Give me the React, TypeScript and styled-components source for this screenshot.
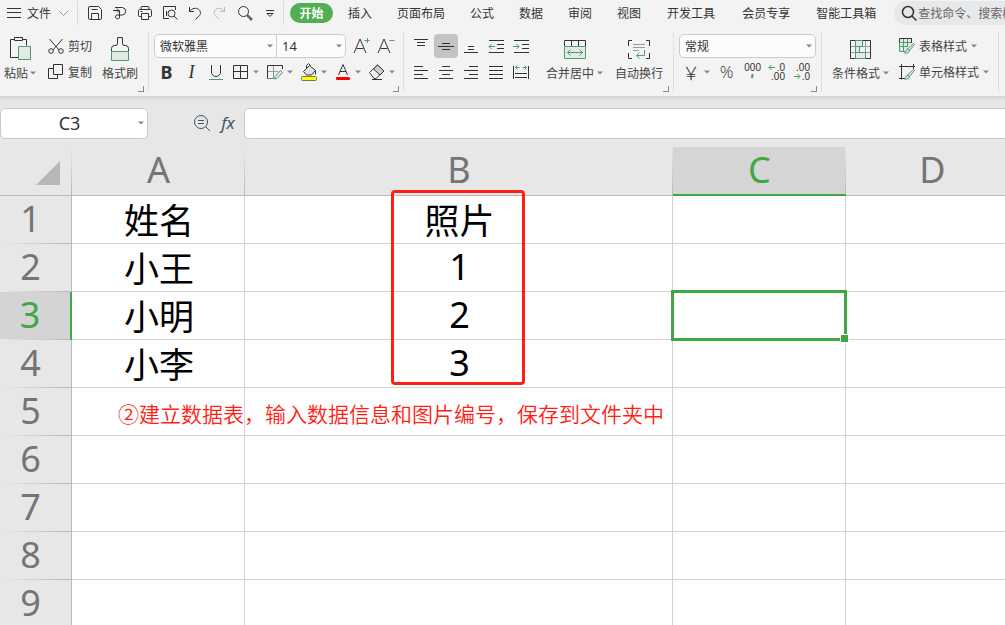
import React from "react";
import styled, { createGlobalStyle, css } from "styled-components";

const INK = "#333333";
const LEAF = "#4f9a72";
const GREEN = "#41a745";
const RED = "#ff2013";
const LINE = "#d2d2d2";

const GlobalStyle = createGlobalStyle`
  * { box-sizing: border-box; }
  body {
    margin: 0;
    background: #e7e7e7;
    color: ${INK};
    font-family: "Noto Sans", "Noto Sans CJK SC", sans-serif;
    font-size: 12px;
  }
  button, input, select {
    margin: 0;
    padding: 0;
    border: 0;
    background: none;
    color: inherit;
    font: inherit;
  }
  svg { display: block; flex: none; }
`;

const Page = styled.div`
  display: flex;
  flex-direction: column;
  height: 100vh;
  overflow: hidden;
`;

/* ---------- icons ---------- */

const IconSvg = styled.svg`
  fill: none;
  stroke: ${INK};
  stroke-width: 1;
  .g { stroke: ${LEAF}; }
  .soft { stroke: #9a9a9a; }
  .tint { stroke: ${LEAF}; fill: #e3eae6; }
  text {
    stroke: none;
    fill: ${INK};
    font-family: "Liberation Sans", sans-serif;
    font-size: 10px;
    text-anchor: end;
  }
`;

type IconProps = { w?: number; h?: number; children: React.ReactNode };
const Icon = ({ w = 16, h = 16, children }: IconProps) => (
  <IconSvg width={w} height={h} viewBox={`0 0 ${w} ${h}`} aria-hidden="true">
    {children}
  </IconSvg>
);

const Caret = () => (
  <svg width="6" height="4" viewBox="0 0 6 4" aria-hidden="true">
    <path d="M0 0.5h6L3 3.5z" fill="#858585" />
  </svg>
);

/* ---------- menu bar ---------- */

const Ribbon = styled.header`
  flex: none;
  background: #f3f3f3;
  border-bottom: 1px solid #d6d6d6;
  box-shadow: 0 1px 3px rgba(0, 0, 0, 0.12);
  z-index: 1;
`;

const MenuBar = styled.nav`
  display: flex;
  align-items: center;
  height: 26px;
  padding-left: 7px;
`;

const FileButton = styled.button`
  display: flex;
  align-items: center;
  flex: none;
  gap: 6px;
  height: 24px;
  margin-right: 8px;
`;

const Divider = styled.span`
  flex: none;
  width: 1px;
  height: 24px;
  background: #dcdcdc;
`;

const QuickAccess = styled.div`
  display: flex;
  flex: none;
  padding: 0 1px 0 4px;
`;

const IconButton = styled.button<{ $w?: number; $active?: boolean }>`
  display: flex;
  align-items: center;
  justify-content: center;
  flex: none;
  width: ${(p) => p.$w ?? 24}px;
  height: 24px;
  border-radius: 4px;
  background: ${(p) => (p.$active ? "#c3c3c3" : "transparent")};
`;

const Tabs = styled.div`
  display: flex;
  flex: none;
  gap: 1px;
  margin-left: 6px;
`;

const Tab = styled.button<{ $current?: boolean; $wide?: boolean }>`
  height: 20px;
  padding: 0 ${(p) => (p.$wide ? 13 : 12)}px;
  line-height: 22px;
  white-space: nowrap;
  ${(p) =>
    p.$current &&
    css`
      width: 43px;
      padding: 0;
      margin-right: 2px;
      border-radius: 10px;
      background: #50ae53;
      color: #ffffff;
      font-weight: 700;
    `}
`;

const Search = styled.label`
  display: flex;
  align-items: center;
  flex: 1;
  gap: 1px;
  min-width: 0;
  height: 24px;
  margin-left: 6px;
  padding-left: 7px;
  border-radius: 12px 0 0 12px;
  background: #e6e8ea;
  input {
    flex: 1;
    min-width: 0;
    outline: none;
  }
  input::placeholder {
    color: #666666;
    opacity: 1;
  }
`;

/* ---------- tool ribbon ---------- */

const Tools = styled.div`
  display: flex;
  height: 70px;
  padding: 6px 0 4px;
`;

const Group = styled.section<{ $pl: number; $pr: number }>`
  position: relative;
  display: flex;
  flex: none;
  height: 60px;
  padding: 1px ${(p) => p.$pr}px 0 ${(p) => p.$pl}px;
  border-right: 1px solid #dfdfdf;
`;

const Launcher = styled.button`
  position: absolute;
  right: 4px;
  bottom: 0;
  width: 6px;
  height: 6px;
  border: solid #8a8a8a;
  border-width: 0 1px 1px 0;
`;

const Stack = styled.div<{ $ml?: number }>`
  display: flex;
  flex-direction: column;
  flex: none;
  margin-left: ${(p) => p.$ml ?? 0}px;
`;

const Row = styled.div<{ $gap?: number }>`
  display: flex;
  align-items: center;
  height: 26px;
  gap: ${(p) => p.$gap ?? 0}px;
`;

const Tool = styled.button`
  display: flex;
  align-items: center;
  gap: 4px;
  height: 26px;
  color: #444444;
  white-space: nowrap;
`;

const BigTool = styled.button<{ $ml?: number }>`
  display: flex;
  flex-direction: column;
  align-items: center;
  flex: none;
  height: 52px;
  margin-left: ${(p) => p.$ml ?? 0}px;
  color: #444444;
`;

const Label = styled.span<{ $gap?: number }>`
  display: flex;
  align-items: center;
  gap: ${(p) => p.$gap ?? 3}px;
  height: 24px;
  white-space: nowrap;
`;

const DropTool = styled.button<{ $w?: number }>`
  display: flex;
  align-items: center;
  gap: 3px;
  width: ${(p) => p.$w ?? 34}px;
  height: 24px;
  padding-left: 2px;
`;

const Fields = styled.div`
  display: flex;
  width: 192px;
  margin-right: 4px;
  height: 24px;
  border: 1px solid #cccccc;
  border-radius: 5px;
  background: #fcfcfc;
  label + label { border-left: 1px solid #cccccc; }
`;

const SelectBox = styled.label<{ $w?: number; $solo?: boolean; $big?: boolean }>`
  display: flex;
  align-items: center;
  ${(p) => (p.$w ? `width: ${p.$w}px;` : "flex: 1;")}
  height: ${(p) => (p.$solo ? 24 : 22)}px;
  padding: 0 3px 0 5px;
  font-size: ${(p) => (p.$big ? 13 : 12)}px;
  ${(p) =>
    p.$solo &&
    css`
      border: 1px solid #cccccc;
      border-radius: 5px;
      background: #fcfcfc;
    `}
  select {
    flex: 1;
    min-width: 0;
    height: 20px;
    appearance: none;
    outline: none;
  }
`;

const FormatText = styled.span<{ $bold?: boolean; $italic?: boolean }>`
  font-family: ${(p) => (p.$italic ? '"Liberation Serif", serif' : '"Noto Sans", sans-serif')};
  font-size: 18px;
  line-height: 24px;
  font-weight: ${(p) => (p.$bold ? 700 : 400)};
  font-style: ${(p) => (p.$italic ? "italic" : "normal")};
`;

const PercentText = styled.span`
  font-family: "Open Sans", "Noto Sans", sans-serif;
  font-size: 17px;
  font-weight: 300;
  line-height: 24px;
`;

const YenText = styled.span`
  width: 20px;
  font-family: "Noto Sans CJK SC", sans-serif;
  font-size: 18px;
  font-weight: 300;
  line-height: 24px;
  text-align: center;
`;

/* ---------- formula bar ---------- */

const FormulaBar = styled.div`
  display: flex;
  align-items: center;
  flex: none;
  height: 46px;
  padding: 7px 0 0;
`;

const NameBox = styled.label`
  display: flex;
  align-items: center;
  width: 148px;
  height: 31px;
  padding: 0 3px 2px 0;
  border: 1px solid #c9c9c9;
  border-radius: 5px;
  background: #ffffff;
  input {
    flex: 1;
    min-width: 0;
    font-size: 18px;
    text-align: center;
    outline: none;
  }
`;

const FormulaTools = styled.div`
  display: flex;
  align-items: center;
  gap: 2px;
  height: 31px;
  padding-bottom: 2px;
  margin: 0 4px 0 42px;
`;

const FxText = styled.span`
  color: #44506b;
  font-family: "Noto Sans", sans-serif;
  font-size: 17px;
  font-style: italic;
`;

const FormulaInput = styled.input`
  flex: 1;
  min-width: 0;
  height: 31px;
  padding: 0 8px;
  border: 1px solid #c9c9c9;
  border-right: 0;
  border-radius: 5px 0 0 5px;
  background: #ffffff;
  font-size: 18px;
  outline: none;
`;

/* ---------- sheet ---------- */

const SheetArea = styled.main`
  flex: 1;
  min-height: 0;
  padding-top: 4px;
  overflow: hidden;
`;

const Sheet = styled.table`
  width: 100%;
  min-width: 1019px;
  table-layout: fixed;
  border-collapse: separate;
  border-spacing: 0;
  font-size: 35px;
  line-height: 44px;
  text-align: center;
`;

const ColHead = styled.th<{ $current?: boolean }>`
  height: 49px;
  padding: 0 0 2px;
  background-repeat: no-repeat;
  background-image: linear-gradient(to bottom, #e7e7e7, #b9b9b9);
  background-size: 1px 100%;
  background-position: right top;
  background-color: ${(p) => (p.$current ? "#d5d5d5" : "#e7e7e7")};
  border-bottom: ${(p) => (p.$current ? `2px solid ${GREEN}` : "1px solid #b9b9b9")};
  color: ${(p) => (p.$current ? GREEN : "#757575")};
  font-size: 36px;
  font-weight: 400;
`;

const Corner = styled(ColHead)`
  vertical-align: bottom;
  svg { margin: 0 0 8px 36px; }
`;

const RowHead = styled.th<{ $current?: boolean }>`
  height: 48px;
  padding: 0 10px 2px 0;
  background: linear-gradient(to right, #e7e7e7, #b9b9b9) left bottom / 100% 1px no-repeat
    ${(p) => (p.$current ? "#d4d4d4" : "#e7e7e7")};
  border-right: ${(p) => (p.$current ? `2px solid ${GREEN}` : "1px solid #b9b9b9")};
  color: ${(p) => (p.$current ? GREEN : "#757575")};
  font-size: 36px;
  font-weight: 400;
`;

const Cell = styled.td<{ $number?: boolean }>`
  position: relative;
  height: 48px;
  padding: ${(p) => (p.$number ? "0 0 2px 2px" : "2px 0 0 2px")};
  border-right: 1px solid ${LINE};
  border-bottom: 1px solid ${LINE};
  background: #ffffff;
  color: #000000;
  font-size: ${(p) => (p.$number ? 36 : 35)}px;
`;

const Selection = styled.div`
  position: absolute;
  z-index: 1;
  inset: -2px;
  border: 3px solid ${GREEN};
  &::after {
    content: "";
    position: absolute;
    right: -5px;
    bottom: -5px;
    width: 7px;
    height: 7px;
    border: 1px solid #ffffff;
    background: ${GREEN};
  }
`;

const RedFrame = styled.div`
  position: absolute;
  z-index: 2;
  top: -6px;
  left: 146px;
  width: 134px;
  height: 195px;
  border: 3px solid ${RED};
  border-radius: 4px;
`;

const Note = styled.div`
  position: absolute;
  z-index: 2;
  top: 10px;
  left: 46px;
  color: ${RED};
  font-family: "Noto Sans CJK SC", sans-serif;
  font-size: 21px;
  font-weight: 350;
  line-height: 30px;
  white-space: nowrap;
`;

const tabs: { name: string; wide?: boolean }[] = [
  { name: "插入" },
  { name: "页面布局" },
  { name: "公式" },
  { name: "数据" },
  { name: "审阅" },
  { name: "视图" },
  { name: "开发工具", wide: true },
  { name: "会员专享", wide: true },
  { name: "智能工具箱" },
];

const columns = ["A", "B", "C", "D"];
const data: Record<string, string> = {
  A1: "姓名", A2: "小王", A3: "小明", A4: "小李",
  B1: "照片", B2: "1", B3: "2", B4: "3",
};

const quick: { name: string; art: React.ReactNode }[] = [
  {
    name: "保存",
    art: (
      <>
        <path d="M3 1.5h8.5l3 3V13a1.500 1.500 0 0 1-1.500 1.500H3A1.500 1.500 0 0 1 1.500 13V3A1.500 1.500 0 0 1 3 1.500z" />
        <path d="M4.500 4.500h6M4.500 14.500v-6h7v6" />
      </>
    ),
  },
  {
    name: "输出为PDF",
    art: (
      <>
        <path d="M3 2.500h7.500a3.800 3.800 0 0 1 0 7.500H5a2 2 0 1 0 2.500 2V5.500" />
        <path d="M1 5.500h6M5 3.500l2 2-2 2" />
      </>
    ),
  },
  {
    name: "打印",
    art: (
      <>
        <path d="M4 4.500V2.500a1 1 0 0 1 1-1h6a1 1 0 0 1 1 1v2" />
        <path d="M4 11.500H2.500a1 1 0 0 1-1-1v-5a1 1 0 0 1 1-1h11a1 1 0 0 1 1 1v5a1 1 0 0 1-1 1H12" />
        <path d="M4.500 8.500h7v6h-7zM3.500 6.500h2" />
      </>
    ),
  },
  {
    name: "打印预览",
    art: (
      <>
        <path d="M13.500 5V1.500h-12v12H7" />
        <circle cx="9.500" cy="8.500" r="3.500" />
        <path d="M12 11l3.500 3.500M4.500 11V6" />
      </>
    ),
  },
  { name: "撤销", art: <path d="M2.500 2v4.500H7M2.500 6.500C5 3 9 2.500 11.500 4.200c2.500 1.800 2.500 5 .5 7L8.500 14.500" /> },
  { name: "恢复", art: <path style={{ stroke: "#b8b8b8" }} d="M12.500 2v4.500H8M12.500 6.500C10 3 6 2.500 4 4.200c-2.200 1.800-2.200 5 0 7L6.500 14" /> },
  {
    name: "查找",
    art: (
      <>
        <circle cx="6.500" cy="6.500" r="5" />
        <path d="M10 10l5 5" strokeWidth="2.500" stroke="#666666" />
      </>
    ),
  },
  { name: "更多", art: <path d="M4 5.500h8M5 8.500h6l-3 3z" /> },
];

const lines = (rows: [number, number, number][]) => rows.map(([a, b, y]) => `M${a} ${y}h${b - a}`).join("");

const alignTop: { name: string; active?: boolean; art: React.ReactNode }[] = [
  { name: "顶端对齐", art: <path d={lines([[1, 15, 1.5], [4, 12, 4.5], [4, 12, 7.5]])} /> },
  { name: "垂直居中", active: true, art: <path d={lines([[4, 12, 5.5], [0, 16, 8.5], [4, 12, 11.5]])} /> },
  { name: "底端对齐", art: <path d={lines([[5, 11, 8.5], [5, 11, 11.5], [1, 15, 14.5]])} /> },
  {
    name: "减少缩进",
    art: (
      <>
        <path d={lines([[1, 16, 2.5], [9, 16, 6.5], [9, 16, 10.5], [1, 16, 14.5]])} />
        <path className="g" d="M7 8.500H1M3.500 6L1 8.500 3.500 11" />
      </>
    ),
  },
  {
    name: "增加缩进",
    art: (
      <>
        <path d={lines([[1, 16, 2.5], [9, 16, 6.5], [9, 16, 10.5], [1, 16, 14.5]])} />
        <path className="g" d="M0 8.500h6M3.500 6L6 8.500 3.500 11" />
      </>
    ),
  },
];

const alignBottom: { name: string; art: React.ReactNode }[] = [
  { name: "左对齐", art: <path d={lines([[1, 10, 2.5], [1, 15, 6.5], [1, 10, 10.5], [1, 15, 14.5]])} /> },
  { name: "居中", art: <path d={lines([[4, 12, 2.5], [1, 15, 6.5], [4, 12, 10.5], [1, 15, 14.5]])} /> },
  { name: "右对齐", art: <path d={lines([[6, 15, 2.5], [1, 15, 6.5], [6, 15, 10.5], [1, 15, 14.5]])} /> },
  { name: "两端对齐", art: <path d={lines([[1, 15, 2.5], [1, 15, 6.5], [1, 15, 10.5], [1, 15, 14.5]])} /> },
  {
    name: "分散对齐",
    art: (
      <>
        <path d="M0.500 2v13M15.500 2v13M2 9.500h12M2 13.500h12" />
        <path className="g" d="M2.500 3.500h4M9.500 3.500h4M4.500 1.500l-2 2 2 2M11.500 1.500l2 2-2 2" />
      </>
    ),
  },
];

const brush = <path className="tint" d="M14.500 5.500l1 1-5 6-2-1.500zM8.500 11l2 1.500c0 2-2 3-5 2.500 1.500-.5 1-3 3-4z" />;

export default function App() {
  return (
    <Page>
      <GlobalStyle />
      <Ribbon>
        <MenuBar>
          <FileButton>
            <Icon w={14} h={12}>
              <path d="M0 1.500h14M0 5.500h14M0 10.500h14" />
            </Icon>
            <span>文件</span>
            <Icon w={12} h={8}>
              <path className="soft" d="M2 2l4.500 4.500L11 2" />
            </Icon>
          </FileButton>
          <Divider />
          <QuickAccess>
            {quick.map((q) => (
              <IconButton key={q.name} $w={25} aria-label={q.name}>
                <Icon>{q.art}</Icon>
              </IconButton>
            ))}
          </QuickAccess>
          <Divider />
          <Tabs>
            <Tab $current>开始</Tab>
            {tabs.map((t) => (
              <Tab key={t.name} $wide={t.wide}>{t.name}</Tab>
            ))}
          </Tabs>
          <Search>
            <Icon>
              <g strokeWidth="1.500">
                <circle cx="7" cy="7" r="5.500" />
                <path d="M11 11l4.500 4.500" />
              </g>
            </Icon>
            <input type="text" placeholder="查找命令、搜索模板" aria-label="查找命令、搜索模板" />
          </Search>
        </MenuBar>

        <Tools>
          <Group $pl={4} $pr={10}>
            <BigTool>
              <Icon w={22} h={28}>
                <path d="M6 6.500H1.500v18h8M14 6.500h3.500v6M5.500 4.500h8v3h-8z" />
                <path className="tint" d="M9.500 13.500h12v13h-12z" />
              </Icon>
              <Label $gap={2}>粘贴<Caret /></Label>
            </BigTool>
            <Stack $ml={12}>
              <Tool>
                <Icon>
                  <path d="M1.500 1l9.500 11M14.500 1L5 12" />
                  <circle cx="3" cy="13" r="2.300" />
                  <circle cx="13" cy="13" r="2.300" />
                </Icon>
                剪切
              </Tool>
              <Tool>
                <Icon>
                  <path d="M5.500 .5h9v10h-9zM5 4.500H.5v10h9V11" />
                </Icon>
                复制
              </Tool>
            </Stack>
            <BigTool $ml={10}>
              <Icon w={20} h={28}>
                <path className="tint" d="M1.500 18.500h17v9h-17z" />
                <path d="M1.500 18v-2.500q0-3 3-3h1.500q1.500 0 1.500-2v-6h5v6q0 2 1.500 2h1.500q3 0 3 3V18" />
              </Icon>
              <Label>格式刷</Label>
            </BigTool>
            <Launcher aria-label="剪贴板设置" />
          </Group>

          <Group $pl={5} $pr={3}>
            <Stack>
              <Row>
                <Fields>
                  <SelectBox $w={121}>
                    <select aria-label="字体"><option>微软雅黑</option></select>
                    <Caret />
                  </SelectBox>
                  <SelectBox $big>
                    <select aria-label="字号"><option>14</option></select>
                    <Caret />
                  </SelectBox>
                </Fields>
                <IconButton aria-label="增大字号">
                  <Icon w={18} h={20}>
                    <path d="M1 17L7 3l6 14M3.500 12.500h7" />
                    <path className="g" d="M11.500 4.500h5M14.500 2v5" />
                  </Icon>
                </IconButton>
                <IconButton aria-label="减小字号">
                  <Icon w={18} h={20}>
                    <path d="M1 17L7 3l6 14M3.500 12.500h7" />
                    <path className="g" d="M12.500 4.500h5" />
                  </Icon>
                </IconButton>
              </Row>
              <Row>
                <IconButton $w={25} aria-label="加粗"><FormatText $bold>B</FormatText></IconButton>
                <IconButton $w={25} aria-label="倾斜"><FormatText $italic>I</FormatText></IconButton>
                <IconButton aria-label="下划线">
                  <Icon w={16} h={18}>
                    <path d="M3.500 2v7a4.500 4.500 0 0 0 9 0V2" />
                    <path className="g" d="M1 16.500h14" />
                  </Icon>
                </IconButton>
                <DropTool $w={36} aria-label="边框">
                  <Icon w={20} h={18}>
                    <path d="M3.500 2.500h14v13h-14zM10.500 2.500v13M3.500 8.500h14" />
                  </Icon>
                  <Caret />
                </DropTool>
                <DropTool aria-label="绘图边框">
                  <Icon w={18} h={18}>
                    <path className="soft" d="M1.500 8.500H12M7.500 3v12" />
                    <path d="M1.500 16V2.500h15V6" />
                    <path className="g" d="M1 15.500h7" />
                    <path className="tint" d="M14.500 7.500l2 2-5.500 6-2.500.5.500-2.500z" />
                  </Icon>
                  <Caret />
                </DropTool>
                <DropTool aria-label="填充颜色">
                  <Icon w={18} h={20}>
                    <path d="M3.500 9.500l6-6 6 5-4 4.500h-5z" fill="#e2e2e2" />
                    <path d="M6.500 6V3.500l2-2 2 2M15.500 8.500v4" />
                    <rect x="1.500" y="14.500" width="15" height="4" rx="1" fill="#ffff00" stroke="#777755" />
                  </Icon>
                  <Caret />
                </DropTool>
                <DropTool aria-label="字体颜色">
                  <Icon w={18} h={20}>
                    <path d="M4.500 13L9 2.500 13.500 13M6 9.500h6" />
                    <rect x="2" y="15" width="14" height="3" rx="1" fill="#ff0000" stroke="none" />
                  </Icon>
                  <Caret />
                </DropTool>
                <DropTool aria-label="清除">
                  <Icon w={18} h={18}>
                    <path d="M1.500 9.500l8-7.500 6.500 6-8 7.500H6z" />
                    <path d="M5.500 6l4-4 6.500 6-4 4z" fill="#cfcfcf" />
                    <path d="M4 16.500h10" />
                  </Icon>
                  <Caret />
                </DropTool>
              </Row>
            </Stack>
            <Launcher aria-label="字体设置" />
          </Group>

          <Group $pl={5} $pr={10}>
            <Stack>
              <Row $gap={1}>
                {alignTop.map((a) => (
                  <IconButton key={a.name} aria-label={a.name} $active={a.active}>
                    <Icon>{a.art}</Icon>
                  </IconButton>
                ))}
              </Row>
              <Row $gap={1}>
                {alignBottom.map((a) => (
                  <IconButton key={a.name} aria-label={a.name}>
                    <Icon>{a.art}</Icon>
                  </IconButton>
                ))}
              </Row>
            </Stack>
            <BigTool $ml={13}>
              <Icon w={22} h={28}>
                <path d="M.5 13V7.500h21V13M7.500 8v5M14.500 8v5" />
                <path className="tint" d="M.5 13.500h21v12H.5z" />
                <path className="g" d="M3.500 19.500h15M6.500 16.500l-3 3 3 3M15.500 16.500l3 3-3 3" />
              </Icon>
              <Label>合并居中<Caret /></Label>
            </BigTool>
            <BigTool $ml={12}>
              <Icon w={22} h={28}>
                <path d="M4 7.500H.5V13M18 7.500h3.500V13M4 25.500H.5V20M18 25.500h3.500V20" />
                <path className="soft" d="M5 11.500h12M5 14.500h12M5 17.500h6" />
                <path className="g" d="M16.500 17v5.500H9M11.500 19.500l-3 3 3 3" />
              </Icon>
              <Label>自动换行</Label>
            </BigTool>
            <Launcher aria-label="对齐设置" />
          </Group>

          <Group $pl={5} $pr={5}>
            <Stack>
              <Row>
                <SelectBox $w={137} $solo>
                  <select aria-label="数字格式"><option>常规</option></select>
                  <Caret />
                </SelectBox>
              </Row>
              <Row>
                <DropTool $w={35} aria-label="货币"><YenText>￥</YenText><Caret /></DropTool>
                <IconButton $w={25} aria-label="百分比"><PercentText>%</PercentText></IconButton>
                <IconButton $w={25} aria-label="千位分隔">
                  <Icon w={20} h={24}>
                    <text x="19" y="11">000</text>
                    <path className="g" d="M10.500 14v2l-1 2" strokeWidth="2" />
                  </Icon>
                </IconButton>
                <IconButton $w={25} aria-label="增加小数位">
                  <Icon w={20} h={24}>
                    <text x="18" y="11">.0</text>
                    <text x="18" y="20">.00</text>
                    <path className="g" d="M8 7.500H2M4.500 5L2 7.500 4.500 10" />
                  </Icon>
                </IconButton>
                <IconButton $w={25} aria-label="减少小数位">
                  <Icon w={20} h={24}>
                    <text x="18" y="11">.00</text>
                    <text x="18" y="20">.0</text>
                    <path className="g" d="M2 16.500h6M5.500 14L8 16.500 5.500 19" />
                  </Icon>
                </IconButton>
              </Row>
            </Stack>
            <Launcher aria-label="数字设置" />
          </Group>

          <Group $pl={10} $pr={9}>
            <BigTool>
              <Icon w={22} h={28}>
                <path className="soft" d="M1 13.500h20M1 19.500h20M15.500 8v18M6.500 8v18" />
                <path d="M.5 7.500h20v18H.5z" />
                <path className="tint" d="M5.500 7.500h7v6h-7zM5.500 13.500h4v6h-4zM5.500 19.500h10v6h-10z" />
              </Icon>
              <Label>条件格式<Caret /></Label>
            </BigTool>
            <Stack $ml={10}>
              <Tool>
                <Icon>
                  <path className="tint" d="M6.500 13.500H.5V.5h12V5M.5 4.500h12M.5 8.500H9M4.500 .5v13M8.500 .5V9" />
                  <path d="M12.500 5V.5H.5V4" />
                  {brush}
                </Icon>
                表格样式<Caret />
              </Tool>
              <Tool>
                <Icon>
                  <path d="M0 2.500h16M2.500 0v15.500M14.500 0v5M0 14.500h6" />
                  {brush}
                </Icon>
                单元格样式<Caret />
              </Tool>
            </Stack>
          </Group>
        </Tools>
      </Ribbon>

      <FormulaBar>
        <NameBox>
          <input type="text" defaultValue="C3" aria-label="名称框" />
          <Caret />
        </NameBox>
        <FormulaTools>
          <IconButton aria-label="浏览公式结果">
            <Icon w={18} h={18}>
              <g style={{ stroke: "#44506b" }}>
                <circle cx="8" cy="8" r="6.500" />
                <path d="M12.500 12.500l4.500 4.500M5 6.500h6M5 9.500h6" />
              </g>
            </Icon>
          </IconButton>
          <IconButton aria-label="插入函数"><FxText>fx</FxText></IconButton>
        </FormulaTools>
        <FormulaInput type="text" aria-label="编辑栏" />
      </FormulaBar>

      <SheetArea>
        <Sheet>
          <colgroup>
            <col style={{ width: 72 }} />
            <col style={{ width: 173 }} />
            <col style={{ width: 428 }} />
            <col style={{ width: 173 }} />
            <col />
          </colgroup>
          <thead>
            <tr>
              <Corner aria-label="全选">
                <svg width="24" height="24" viewBox="0 0 24 24" aria-hidden="true">
                  <path d="M24 0v24H0z" fill="#b7b7b7" />
                </svg>
              </Corner>
              {columns.map((c) => (
                <ColHead key={c} scope="col" $current={c === "C"}>{c}</ColHead>
              ))}
            </tr>
          </thead>
          <tbody>
            {[1, 2, 3, 4, 5, 6, 7, 8, 9].map((r) => (
              <tr key={r}>
                <RowHead scope="row" $current={r === 3}>{r}</RowHead>
                {columns.map((c) => {
                  const id = `${c}${r}`;
                  return (
                    <Cell key={id} $number={/^\d+$/.test(data[id] ?? "")}>
                      {data[id]}
                      {id === "B1" && <RedFrame />}
                      {id === "C3" && <Selection />}
                      {id === "A5" && <Note>②建立数据表，输入数据信息和图片编号，保存到文件夹中</Note>}
                    </Cell>
                  );
                })}
              </tr>
            ))}
          </tbody>
        </Sheet>
      </SheetArea>
    </Page>
  );
}
